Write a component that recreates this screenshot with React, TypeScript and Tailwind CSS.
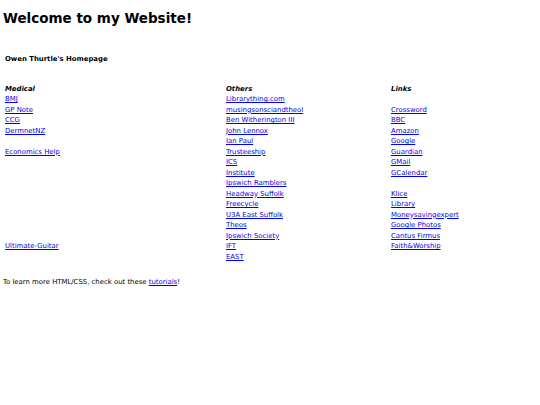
import React from 'react';

const medical = ['BMJ', 'GP Note', 'CCG', 'DermnetNZ', '', 'Economics Help', '', '', '', '', '', '', '', '', 'Ultimate-Guitar'];
const others = [
  'Librarything.com',
  'musingsonsciandtheol',
  'Ben Witherington III',
  'John Lennox',
  'Ian Paul',
  'Trusteeship',
  'ICS',
  'Institute',
  'Ipswich Ramblers',
  'Headway Suffolk',
  'Freecycle',
  'U3A East Suffolk',
  'Theos',
  'Ipswich Society',
  'IFT',
  'EAST',
];
const links = ['', 'Crossword', 'BBC', 'Amazon', 'Google', 'Guardian', 'GMail', 'GCalendar', '', 'Klice', 'Library', 'Moneysavingexpert', 'Google Photos', 'Cantus Firmus', 'Faith&Worship'];

function Column({ title, items }: { title: string; items: string[] }) {
  return (
    <div className="flex flex-col">
      <div className="h-[10.5px] font-bold italic">{title}</div>
      {items.map((item, i) =>
        item ? (
          <a key={i} href="#" className="h-[10.5px] text-[#0000ee] underline w-fit">
            {item}
          </a>
        ) : (
          <div key={i} className="h-[10.5px]" />
        )
      )}
    </div>
  );
}

export default function App() {
  return (
    <div className="min-h-screen bg-white text-black font-['DejaVu_Sans',sans-serif] text-[6.9px] leading-[10.5px] px-[3px]">
      <h1 className="text-[13.5px] font-bold leading-[16px] pt-[10px]">Welcome to my Website!</h1>

      {/* table */}
      <div className="pl-[2px] mt-[28px]">
        <div className="font-bold h-[10.5px]">Owen Thurtle's Homepage</div>
        <div className="grid grid-cols-[221px_165px_1fr] mt-[19px]">
          <Column title="Medical" items={medical} />
          <Column title="Others" items={others} />
          <Column title="Links" items={links} />
        </div>
      </div>

      <p className="mt-[15px]">
        To learn more HTML/CSS, check out these{' '}
        <a href="#" className="text-[#0000ee] underline">tutorials</a>!
      </p>
    </div>
  );
}
